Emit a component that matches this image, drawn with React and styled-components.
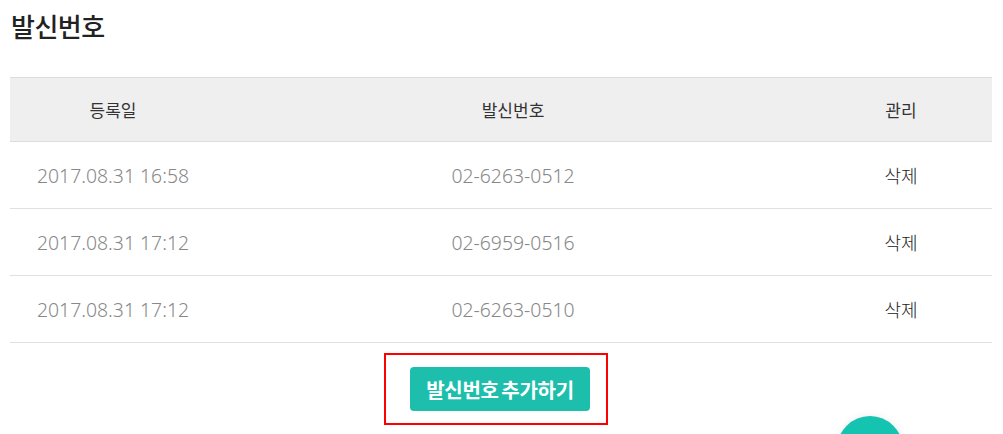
import React from "react";
import styled, { createGlobalStyle } from "styled-components";

const GlobalStyle = createGlobalStyle`
    body {
        margin: 0;
        background: #fff;
        font-family: "Noto Sans", "Noto Sans CJK KR", sans-serif;
    }
`;

const Page = styled.div`
    position: relative;
    width: 1003px;
    height: 434px;
    overflow: hidden;
    padding: 0 11px 0 10px;
    box-sizing: border-box;
`;

const Title = styled.h2`
    margin: 0;
    padding: 8px 0 0 1px;
    height: 77px;
    box-sizing: border-box;
    font-size: 26px;
    font-weight: 500;
    line-height: 38px;
    color: #222;
    letter-spacing: -0.5px;
`;

const Table = styled.div`
    display: grid;
    grid-template-columns: 206px 594px 1fr;
    border-top: 1px solid #dcdcdc;
`;

const HeadCell = styled.div`
    height: 63px;
    background: #efefef;
    border-bottom: 1px solid #dcdcdc;
    display: flex;
    align-items: center;
    justify-content: center;
    font-size: 17px;
    color: #333;
`;

const Cell = styled.div`
    height: 66px;
    border-bottom: 1px solid #e0e0e0;
    display: flex;
    align-items: center;
    justify-content: center;
    font-size: ${(p) => (p.$dark ? "18px" : "19.4px")};
    font-weight: 300;
    color: ${(p) => (p.$dark ? "#222" : "#888")};
`;

const ButtonArea = styled.div`
    display: flex;
    justify-content: center;
    padding-top: 10px;
`;

const Highlight = styled.div`
    width: 224px;
    height: 72px;
    box-sizing: border-box;
    border: 2px solid #f00;
    display: flex;
    align-items: center;
    padding-left: 24px;
    margin-right: 10px;
`;

const AddButton = styled.button`
    width: 180px;
    height: 44px;
    border: 0;
    border-radius: 4px;
    background: #1dbfac;
    color: #fff;
    font-family: "Noto Sans CJK KR", sans-serif;
    font-size: 20px;
    font-weight: 700;
    letter-spacing: -0.3px;
    word-spacing: -1.5px;
    padding: 0;
    cursor: pointer;
`;

const Fab = styled.div`
    position: absolute;
    left: 837px;
    top: 416px;
    width: 66px;
    height: 66px;
    border-radius: 50%;
    background: #14c4b0;
    box-shadow: 0 0 8px rgba(0, 0, 0, 0.08);
`;

const rows = [
    ["2017.08.31 16:58", "02-6263-0512"],
    ["2017.08.31 17:12", "02-6959-0516"],
    ["2017.08.31 17:12", "02-6263-0510"],
];

const App = () => {
    return (
        <Page>
            <GlobalStyle />
            <Title>발신번호</Title>
            <Table>
                <HeadCell>등록일</HeadCell>
                <HeadCell>발신번호</HeadCell>
                <HeadCell>관리</HeadCell>
                {rows.map(([date, num], i) => (
                    <React.Fragment key={i}>
                        <Cell>{date}</Cell>
                        <Cell>{num}</Cell>
                        <Cell $dark>삭제</Cell>
                    </React.Fragment>
                ))}
            </Table>
            <ButtonArea>
                <Highlight>
                    <AddButton>발신번호 추가하기</AddButton>
                </Highlight>
            </ButtonArea>
            <Fab />
        </Page>
    );
};

export default App;
